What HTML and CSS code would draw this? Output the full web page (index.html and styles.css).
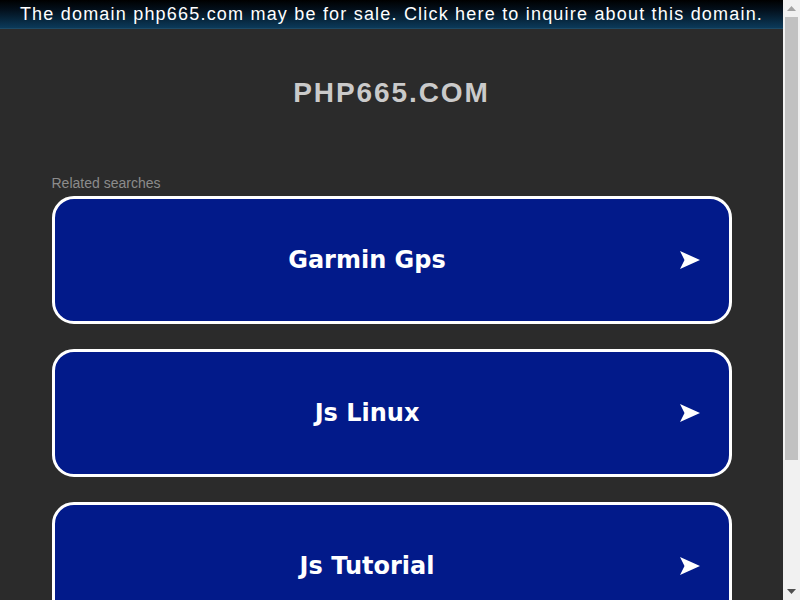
FILE: index.html
```html
<!DOCTYPE html>
<html lang="en">
<head>
    <meta charset="UTF-8">
    <meta name="viewport" content="width=device-width, initial-scale=1.0">
    <title>php665.com</title>
    <link rel="stylesheet" href="styles.css">
</head>
<body>

<div class="pagina">

    <!-- Faixa de venda do domínio -->
    <a class="banner" href="#">The domain php665.com may be for sale. Click here to inquire about this domain.</a>

    <div class="header">
        <h1 class="titulo">PHP665.COM</h1>
    </div>

    <div class="container">
        <p class="related">Related searches</p>

        <a class="card" href="#">
            <span class="card-texto">Garmin Gps</span>
            <svg class="seta" viewBox="0 0 20 18"><path d="M0 0 L20 9 L0 18 L4.5 9 Z" fill="#fff"/></svg>
        </a>

        <a class="card" href="#">
            <span class="card-texto">Js Linux</span>
            <svg class="seta" viewBox="0 0 20 18"><path d="M0 0 L20 9 L0 18 L4.5 9 Z" fill="#fff"/></svg>
        </a>

        <a class="card" href="#">
            <span class="card-texto">Js Tutorial</span>
            <svg class="seta" viewBox="0 0 20 18"><path d="M0 0 L20 9 L0 18 L4.5 9 Z" fill="#fff"/></svg>
        </a>
    </div>

</div>

<!-- Barra de rolagem -->
<div class="rolagem">
    <div class="rolagem-btn">
        <svg viewBox="0 0 9 5" width="9" height="5"><path d="M0 5 L4.5 0 L9 5 Z" fill="#a3a3a3"/></svg>
    </div>
    <div class="rolagem-trilho">
        <div class="rolagem-polegar"></div>
    </div>
    <div class="rolagem-btn">
        <svg viewBox="0 0 9 5" width="9" height="5"><path d="M0 0 L9 0 L4.5 5 Z" fill="#505050"/></svg>
    </div>
</div>

</body>
</html>
```

FILE: styles.css
```css
html, body {
    margin: 0;
    padding: 0;
    height: 100%;
    overflow: hidden;
}

body {
    display: flex;
    background-color: #2b2b2b;
    font-family: 'Liberation Sans', Arial, sans-serif;
}

.pagina {
    flex: 1;
    height: 100vh;
    overflow: hidden;
}

/* Barra de rolagem */
.rolagem {
    width: 17px;
    height: 100vh;
    display: flex;
    flex-direction: column;
    background-color: #f1f1f1;
}

.rolagem-btn {
    height: 17px;
    display: flex;
    align-items: center;
    justify-content: center;
}

.rolagem-trilho {
    flex: 1;
    padding: 0 2px;
}

.rolagem-polegar {
    height: 443px;
    background-color: #c1c1c1;
}

.banner {
    display: block;
    height: 29px;
    line-height: 28px;
    text-align: center;
    color: #fff;
    font-size: 18px;
    letter-spacing: 1.2px;
    text-decoration: none;
    background: linear-gradient(to bottom, #000 0%, #03101c 35%, #0b3a5a 100%);
    border-bottom: 1px solid #1d4a66;
    box-sizing: border-box;
}

.header {
    padding-top: 47px;
    text-align: center;
}

.titulo {
    margin: 0;
    font-size: 28px;
    line-height: 34px;
    letter-spacing: 1.9px;
    font-weight: bold;
    color: #cacaca;
}

.container {
    width: 680px;
    margin: 0 auto;
    padding-top: 65px;
    padding-bottom: 90px;
}

.related {
    margin: 0 0 5px 0;
    font-size: 14px;
    line-height: 16px;
    color: #8c8c8c;
}

.card {
    display: flex;
    align-items: center;
    height: 128px;
    margin-bottom: 25px;
    padding: 0 29px 0 0;
    background-color: #021a8a;
    border: 3px solid #fff;
    border-radius: 22px;
    box-sizing: border-box;
    text-decoration: none;
}

.card-texto {
    flex: 1;
    text-align: center;
    color: #fff;
    font-family: 'DejaVu Sans', Verdana, sans-serif;
    font-weight: bold;
    font-size: 24px;
}

.seta {
    width: 20px;
    height: 18px;
}
```
